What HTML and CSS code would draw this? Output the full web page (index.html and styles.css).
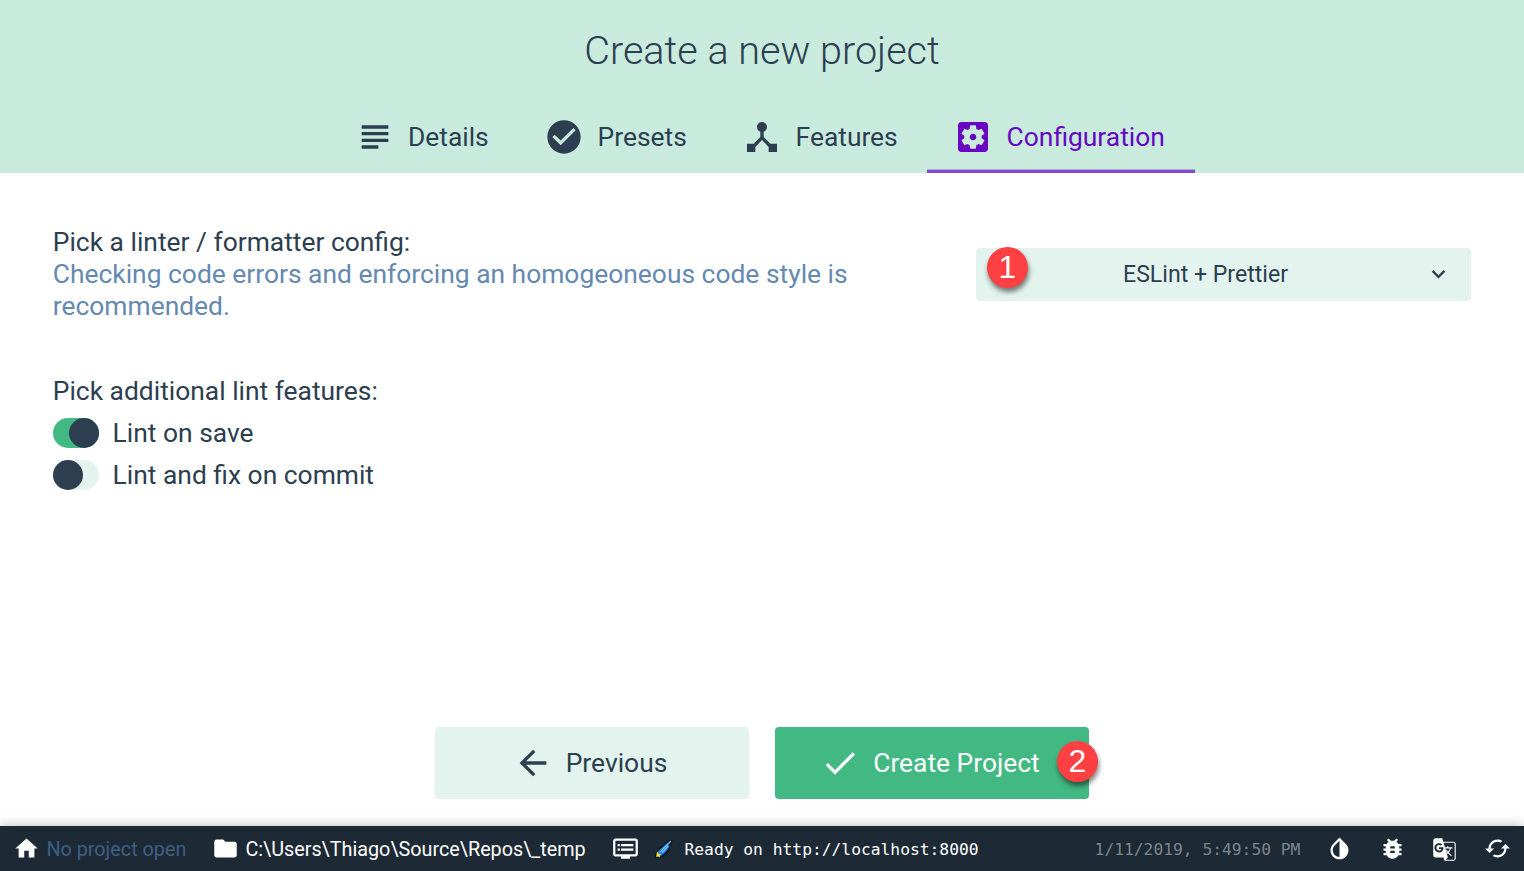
FILE: index.html
```html
<!DOCTYPE html>
<html lang="en">
<head>
<meta charset="utf-8">
<title>Create a new project</title>
<link rel="stylesheet" href="styles.css">
</head>
<body>
<div class="app">
  <header class="header">
    <h1 class="title"><span>Create a new project</span></h1>
    <nav class="tabs">
      <a class="tab tab-details"><svg class="icon" viewBox="0 0 24 24"><path d="M14 17H4v2h10v-2zm6-8H4v2h16V9zM4 15h16v-2H4v2zM4 5v2h16V5H4z"/></svg><span>Details</span></a>
      <a class="tab tab-presets"><svg class="icon" viewBox="0 0 24 24"><path d="M12 2C6.48 2 2 6.48 2 12s4.48 10 10 10 10-4.48 10-10S17.52 2 12 2zm-2 15l-5-5 1.41-1.41L10 14.17l7.59-7.59L19 8l-9 9z"/></svg><span>Presets</span></a>
      <a class="tab tab-features"><svg class="icon" viewBox="0 0 24 24"><path d="M17 16l-4-4V8.82C14.16 8.4 15 7.3 15 6c0-1.66-1.34-3-3-3S9 4.34 9 6c0 1.3.84 2.4 2 2.82V12l-4 4H3v5h5v-3.05l4-4.2 4 4.2V21h5v-5h-4z"/></svg><span>Features</span></a>
      <a class="tab tab-configuration active"><svg class="icon" viewBox="0 0 24 24"><path d="M12 10c-1.1 0-2 .9-2 2s.9 2 2 2 2-.9 2-2-.9-2-2-2zm7-7H5c-1.11 0-2 .9-2 2v14c0 1.1.89 2 2 2h14c1.11 0 2-.9 2-2V5c0-1.1-.89-2-2-2zm-1.75 9c0 .23-.02.46-.05.68l1.48 1.16c.13.11.17.3.08.45l-1.4 2.42c-.09.15-.27.21-.43.15l-1.74-.7c-.36.28-.76.51-1.18.69l-.26 1.85c-.03.17-.18.3-.35.3h-2.8c-.17 0-.32-.13-.35-.29l-.26-1.85c-.43-.18-.82-.41-1.18-.69l-1.74.7c-.16.06-.34 0-.43-.15l-1.4-2.42c-.09-.15-.05-.34.08-.45l1.48-1.16c-.03-.23-.05-.46-.05-.69 0-.23.02-.46.05-.68l-1.48-1.16c-.13-.11-.17-.3-.08-.45l1.4-2.42c.09-.15.27-.21.43-.15l1.74.7c.36-.28.76-.51 1.18-.69l.26-1.85c.03-.17.18-.3.35-.3h2.8c.17 0 .32.13.35.29l.26 1.85c.43.18.82.41 1.18.69l1.74-.7c.16-.06.34 0 .43.15l1.4 2.42c.09.15.05.34-.08.45l-1.48 1.16c.03.23.05.46.05.69z"/></svg><span>Configuration</span></a>
    </nav>
  </header>
  <main class="content">
    <section class="linter">
      <div class="prompt">
        <div class="label"><span>Pick a linter / formatter config:</span></div>
        <div class="description">Checking code errors and enforcing an homogeoneous code style is recommended.</div>
      </div>
      <div class="select">
        <span class="select-label">ESLint + Prettier</span>
        <svg class="chevron" viewBox="0 0 24 24"><path d="M16.59 8.09L12 12.67 7.41 8.09 6 9.5l6 6 6-6z"/></svg>
        <span class="badge badge-one">1</span>
      </div>
    </section>
    <section class="features">
      <div class="label"><span>Pick additional lint features:</span></div>
      <div class="switches">
        <div class="switch-row"><span class="switch on"><i class="knob"></i></span><span>Lint on save</span></div>
        <div class="switch-row"><span class="switch"><i class="knob"></i></span><span>Lint and fix on commit</span></div>
      </div>
    </section>
  </main>
  <div class="actions">
    <button class="button"><svg class="icon" viewBox="0 0 24 24"><path d="M20 11H7.83l5.59-5.59L12 4l-8 8 8 8 1.41-1.41L7.83 13H20v-2z"/></svg><span>Previous</span></button>
    <button class="button primary"><svg class="icon" viewBox="0 0 24 24"><path d="M9 16.17L4.83 12l-1.42 1.41L9 19 21 7l-1.41-1.41z"/></svg><span>Create Project</span><b class="badge badge-two">2</b></button>
  </div>
  <footer class="status">
    <svg class="small-icon" viewBox="0 0 24 24"><path d="M10 20v-6h4v6h5v-8h3L12 3 2 12h3v8z"/></svg>
    <span class="no-project">No project open</span>
    <svg class="small-icon" viewBox="0 0 24 24"><path d="M10 4H4c-1.1 0-1.99.9-1.99 2L2 18c0 1.1.9 2 2 2h16c1.1 0 2-.9 2-2V8c0-1.1-.9-2-2-2h-8l-2-2z"/></svg>
    <span class="path">C:\Users\Thiago\Source\Repos\_temp</span>
    <svg class="small-icon log" viewBox="0 0 24 24"><path d="M21 3H3c-1.1 0-2 .9-2 2v12c0 1.1.9 2 2 2h5v2h8v-2h5c1.1 0 1.99-.9 1.99-2L23 5c0-1.1-.9-2-2-2zm0 14H3V5h18v12zm-2-9H8v2h11V8zm0 4H8v2h11v-2zM7 8H5v2h2V8zm0 4H5v2h2v-2z"/></svg>
    <svg class="comet" viewBox="0 0 20 22"><path d="M18.5 1.5L14 3 4 11 1 17l1 3 6-.5 6-5.5 3-6z" fill="#0b0f14"/><path d="M17.5 2.5L12 6l-8 7-1 4 3 2 6-5 4-6-2-1z" fill="#1b76cc"/><path d="M17 3L6 14M14 8l-6 7" stroke="#6dbcf5" stroke-width="1.3"/><path d="M3 13.5l1.5 2 2.5.5-1.5 1.5.5 2-2-1-2 .5.5-2z" fill="#ffe02e"/></svg>
    <span class="message">Ready on http://localhost:8000</span>
    <span class="date">1/11/2019, 5:49:50 PM</span>
    <svg class="small-icon tool" viewBox="0 0 24 24"><path d="M17.66 7.93L12 2.27 6.34 7.93c-3.12 3.12-3.12 8.19 0 11.31C7.9 20.8 9.95 21.58 12 21.58s4.1-.78 5.66-2.34c3.12-3.12 3.12-8.19 0-11.31zM12 19.59c-1.6 0-3.11-.62-4.24-1.76C6.62 16.69 6 15.19 6 13.59s.62-3.11 1.76-4.24L12 5.1v14.49z"/></svg>
    <svg class="small-icon tool" viewBox="0 0 24 24"><path d="M20 8h-2.81c-.45-.78-1.07-1.45-1.82-1.96L17 4.41 15.59 3l-2.17 2.17C12.96 5.06 12.49 5 12 5s-.96.06-1.41.17L8.41 3 7 4.41l1.62 1.63C7.88 6.55 7.26 7.22 6.81 8H4v2h2.09c-.05.33-.09.66-.09 1v1H4v2h2v1c0 .34.04.67.09 1H4v2h2.81c1.04 1.79 2.97 3 5.19 3s4.15-1.21 5.19-3H20v-2h-2.09c.05-.33.09-.66.09-1v-1h2v-2h-2v-1c0-.34-.04-.67-.09-1H20V8zm-6 8h-4v-2h4v2zm0-4h-4v-2h4v2z"/></svg>
    <svg class="small-icon tool translate" viewBox="0 0 24 24"><path d="M20 5h-9.12L10 2H4c-1.1 0-2 .9-2 2v13c0 1.1.9 2 2 2h7l1 3h8c1.1 0 2-.9 2-2V7c0-1.1-.9-2-2-2zM7.17 14.59c-2.25 0-4.09-1.83-4.09-4.09s1.83-4.09 4.09-4.09c1.04 0 1.99.37 2.74 1.07l.07.06-1.23 1.18-.06-.05c-.29-.27-.78-.59-1.52-.59-1.31 0-2.38 1.09-2.38 2.42s1.07 2.42 2.38 2.42c1.37 0 1.96-.87 2.12-1.46H7.08V9.91h3.95l.01.07c.04.21.05.4.05.61 0 2.35-1.61 4-3.92 4zm6.03-1.71c.33.6.74 1.18 1.19 1.7l-.54.53-.65-2.23zm.77-.76h-.99l-.31-1.04h3.99s-.34 1.31-1.56 2.74c-.52-.62-.89-1.23-1.13-1.7zM21 20c0 .55-.45 1-1 1h-7l2-2-.81-2.77.92-.92L17.79 18l.73-.73-2.71-2.68c.9-1.03 1.6-2.25 1.92-3.51H19v-1.04h-3.64V9h-1.04v1.04h-1.96L11.18 6H20c.55 0 1 .45 1 1v13z"/></svg>
    <svg class="small-icon tool" viewBox="0 0 24 24"><path d="M19 8l-4 4h3c0 3.31-2.69 6-6 6-1.01 0-1.97-.25-2.8-.7l-1.46 1.46C8.97 19.54 10.43 20 12 20c4.42 0 8-3.58 8-8h3l-4-4zM6 12c0-3.31 2.69-6 6-6 1.01 0 1.97.25 2.8.7l1.46-1.46C15.03 4.46 13.57 4 12 4c-4.42 0-8 3.58-8 8H1l4 4 4-4H6z"/></svg>
  </footer>
</div>
</body>
</html>
```
FILE: styles.css
```css
* { box-sizing: border-box; }
body { margin: 0; font-family: Roboto, sans-serif; font-size: 26.4px; color: #2c3e50; background: #fff; }
svg { display: block; fill: currentColor; flex: none; }
.app { height: 871px; display: flex; flex-direction: column; overflow: hidden; }
.header { height: 173px; flex: none; background: #c8ebde; }
.title { margin: 0; height: 100px; line-height: 101px; text-align: center; font-size: 39.6px; font-weight: 300; }
.tabs { display: flex; justify-content: center; height: 73px; padding-right: 1px; }
.tab { display: flex; align-items: center; gap: 13.2px; padding-left: 26.6px; border-bottom: 3px solid transparent; padding-top: 3px; white-space: nowrap; }
.tab-details { width: 189.6px; }
.tab-presets { width: 198px; }
.tab-features { width: 211px; }
.tab-configuration { width: 268px; }
.active { color: #6806c1; border-bottom-color: #8549cf; box-shadow: inset 0 -1px rgba(133,73,207,.4); }
.icon { width: 40px; height: 40px; }
.content { flex: 1; padding: 53px 53px 0 52.8px; line-height: 32px; }
.linter { display: flex; justify-content: space-between; }
.prompt { width: 840px; }
.description { color: #6589b0; }
.select { position: relative; display: flex; align-items: center; justify-content: flex-end; width: 495px; height: 53px; margin-top: 22px; padding-right: 19.5px; border-radius: 4px; background: #e3f4ee; }
.select-label { flex: 1; text-align: center; padding-left: 18px; padding-right: 7.5px; font-size: 23.1px; }
.chevron { width: 27px; height: 27px; }
.badge { position: absolute; width: 41px; height: 41px; border-radius: 50%; background: #ff4042; color: #fff; text-align: center; font: 32px/41px "Liberation Sans", sans-serif; box-shadow: 1px 4px 5px rgba(0,0,0,.5); }
.badge-one { left: 11px; top: -1px; }
.features { margin-top: 53px; }
.switches { padding-top: 5px; }
.switch-row { display: flex; align-items: center; gap: 13.8px; height: 42px; }
.switch { width: 46px; height: 30px; border-radius: 15px; background: #e3f4ee; }
.knob { display: block; width: 30px; height: 30px; border-radius: 50%; background: #2c3e50; }
.on { background: #42b983; }
.on .knob { margin-left: auto; }
.actions { display: flex; justify-content: center; gap: 26px; height: 99px; flex: none; }
.button { position: relative; display: flex; align-items: center; justify-content: center; gap: 13px; width: 314px; height: 72px; padding: 0 4px 0 0; border: 0; border-radius: 4px; background: #e3f4ee; color: #2c3e50; font: 26.4px Roboto, sans-serif; }
.primary { background: #42b983; color: #fff; }
.badge-two { left: 282px; top: 14px; }
.status { position: relative; display: flex; align-items: center; height: 45px; flex: none; padding: 0 13px; background: #1d2935; color: #fff; font-size: 19.8px; white-space: nowrap; box-shadow: 0 -2px 10px rgba(0,0,0,.2); }
.small-icon { width: 27px; height: 27px; }
.no-project { width: 172px; padding: 1px 0 0 6.4px; color: #3f5f83; }
.path { width: 372.5px; padding: 1px 0 0 6.4px; }
.comet { width: 20px; height: 22px; margin-left: 15px; }
.message, .date { font-family: "DejaVu Sans Mono", monospace; font-size: 16.3px; padding-top: 2px; }
.message { margin-left: 11px; }
.date { margin-left: auto; margin-right: 25.5px; color: #7d858c; }
.tool + .tool { margin-left: 25.7px; }
.translate { margin-top: 1px; }
```
